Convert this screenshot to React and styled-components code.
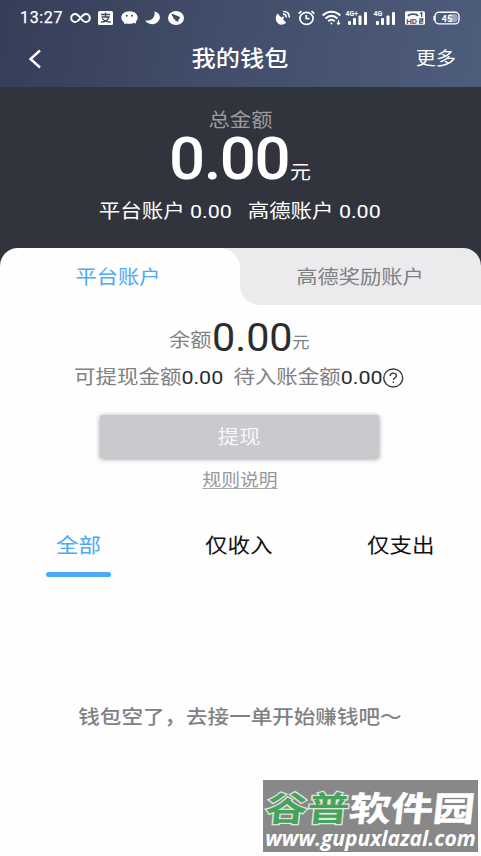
import React from 'react';
import styled, { createGlobalStyle } from 'styled-components';

const GlobalStyle = createGlobalStyle`
  * { box-sizing: border-box; }
  body {
    margin: 0;
    background: #fff;
    font-family: Roboto, "Noto Sans CJK SC", sans-serif;
  }
`;

const Screen = styled.main`
  width: 481px;
  height: 856px;
  display: flex;
  flex-direction: column;
  overflow: hidden;
  background: #fefefe;
`;

const Header = styled.header`
  height: 88px;
  background: linear-gradient(100deg, #363d57 0%, #414d69 45%, #4e5d7c 100%);
  border-bottom: 1px solid #2f3443;
  color: #fff;
`;

const StatusBar = styled.div`
  height: 35px;
  padding: 0 20px;
  display: flex;
  align-items: center;
`;

const Clock = styled.span`
  width: 50px;
  font-size: 16px;
  line-height: 20px;
  letter-spacing: 0.65px;
  -webkit-text-stroke: 0.25px #fff;
`;

const StatusIcon = styled.svg`
  display: block;
  flex: none;
  width: ${(p) => p.$w}px;
  height: 18px;
  margin-left: ${(p) => p.$gap || 0}px;
  overflow: visible;
`;

const NavBar = styled.nav`
  height: 48px;
  padding: 0 25px 0 27px;
  display: grid;
  grid-template-columns: 60px 1fr 60px;
  align-items: center;
`;

const Title = styled.h1`
  margin: 0 3px 0 0;
  text-align: center;
  font-size: 22px;
  line-height: 30px;
  font-weight: 500;
  transform: scaleX(1.1);
`;

const More = styled.span`
  text-align: right;
  font-size: 18px;
  line-height: 26px;
  transform: scaleX(1.12);
  transform-origin: right;
`;

const Summary = styled.section`
  height: 160px;
  padding-top: 20px;
  display: flex;
  flex-direction: column;
  align-items: center;
  background: #31343d;
  color: #fff;
`;

const SummaryLabel = styled.div`
  height: 26px;
  font-size: 19px;
  line-height: 26px;
  color: #9b9c9f;
  transform: scaleX(1.12);
`;

const Total = styled.div`
  height: 50px;
  display: flex;
  align-items: baseline;
  line-height: 50px;
  margin-right: 2px;
`;

const TotalNumber = styled.span`
  width: 122px;
  font-size: 60px;
  font-weight: 500;
  letter-spacing: -1.4px;
  transform: scaleX(1.06);
  transform-origin: left;
`;

const TotalUnit = styled.span`
  font-size: 19px;
  line-height: 24px;
  transform: scaleX(1.1);
`;

const Breakdown = styled.div`
  margin: 14px 2px 0 0;
  display: flex;
  gap: 14px;
  font-size: 19px;
  line-height: 28px;
  white-space: pre;
  transform: scaleX(1.13);
`;

const AccountTabs = styled.div`
  height: 57px;
  display: grid;
  grid-template-columns: 240px 241px;
  background: linear-gradient(#31343d 50%, #fefefe 50%);
`;

const TabBacking = styled.div`
  background: ${(p) => (p.$active ? 'linear-gradient(90deg, transparent 50%, #ebebed 50%)' : 'linear-gradient(#31343d 50%, #fefefe 50%)')};
`;

const AccountTab = styled.div`
  height: 57px;
  padding: ${(p) => (p.$active ? '3px 4px 0 0' : '3px 0 0')};
  display: flex;
  justify-content: center;
  align-items: center;
  font-size: 19px;
  line-height: 28px;
  color: ${(p) => (p.$active ? '#4ba9fb' : '#808184')};
  background: ${(p) => (p.$active ? '#fefefe' : '#ebebed')};
  border-radius: ${(p) => (p.$active ? '18px 20px 0 0' : '0 18px 0 20px')};
`;

const WideText = styled.span`
  display: inline-block;
  transform: scaleX(1.12);
`;

const Balance = styled.section`
  height: 208px;
  padding: 10px 2px 0 0;
  display: flex;
  flex-direction: column;
  align-items: center;
`;

const BalanceRow = styled.div`
  height: 46px;
  display: flex;
  align-items: center;
  color: #808184;
`;

const BalanceLabel = styled.span`
  width: 43px;
  padding-top: 6px;
  font-size: 19px;
  line-height: 28px;
  transform: scaleX(1.12);
  transform-origin: left;
`;

const BalanceNumber = styled.span`
  width: 81px;
  font-size: 39px;
  line-height: 46px;
  color: #2b2c2e;
  transform: scaleX(1.06);
  transform-origin: left;
`;

const BalanceUnit = styled.span`
  padding-top: 9px;
  font-size: 16px;
  line-height: 24px;
  transform: scaleX(1.08);
`;

const Details = styled.div`
  margin: 3px 1px 0 0;
  display: flex;
  align-items: center;
  font-size: 19px;
  line-height: 28px;
  color: #808184;
  transform: scaleX(1.13);
`;

const Amount = styled.b`
  font-weight: 400;
  color: #2b2c2e;
  margin-right: ${(p) => p.$gap || 0}px;
`;

const HelpIcon = styled.svg`
  width: 19px;
  height: 21px;
  display: block;
`;

const Withdraw = styled.button`
  width: 279px;
  height: 43px;
  margin: 23px 0 0;
  padding: 3px 0 0;
  flex: none;
  border: 0;
  border-radius: 2px;
  background: #c9cacd;
  color: #f7f7f8;
  font: 19px/28px Roboto, "Noto Sans CJK SC", sans-serif;
  box-shadow: 0 1px 5px rgba(0, 0, 0, 0.38);
`;

const Rules = styled.a`
  margin-top: 10px;
  font-size: 17px;
  line-height: 24px;
  color: #97989a;
  border-bottom: 1px solid #a8a8aa;
  height: 21px;
  transform: scaleX(1.11);
`;

const Filters = styled.div`
  height: 67px;
  padding-top: 17px;
  display: grid;
  grid-template-columns: 157px 164px 160px;
  justify-items: center;
`;

const Filter = styled.div`
  display: flex;
  flex-direction: column;
  align-items: center;
  font-size: 20.5px;
  line-height: 32px;
  color: ${(p) => (p.$active ? '#4ba9fb' : '#111')};

  &::after {
    content: '';
    width: 65px;
    height: 5px;
    margin-top: 10px;
    border-radius: 3px;
    background: ${(p) => (p.$active ? '#4ba9fb' : 'transparent')};
  }
`;

const FilterText = styled.span`
  transform: scaleX(1.1);
`;

const Empty = styled.p`
  height: 200px;
  margin: 0;
  padding: 124px 1px 0 0;
  text-align: center;
  font-size: 19.5px;
  line-height: 28px;
  font-weight: 500;
  color: #808184;
  transform: scaleX(1.105);
`;

const Watermark = styled.footer`
  width: 215px;
  height: 72px;
  padding-top: 8px;
  margin-left: 263px;
  background: #888;
  color: #fff;
`;

const Brand = styled.div`
  height: 38px;
  display: flex;
  justify-content: center;
  font: 900 34px/38px "Noto Sans CJK SC", sans-serif;
  white-space: nowrap;
  transform: skewX(-6deg) scaleX(1.23);
`;

const BrandAccent = styled.span`
  font-weight: 700;
  color: #46a35a;
  -webkit-text-stroke: 2.5px #dde5de;
  paint-order: stroke fill;
`;

const BrandName = styled.span`
  font-weight: 700;
  -webkit-text-stroke: 0.5px #fff;
`;

const Site = styled.div`
  height: 26px;
  display: flex;
  justify-content: center;
  font: italic 700 21px/25px "Open Sans", sans-serif;
  white-space: nowrap;
`;

const Signal = ({ label, gap }) => (
  <StatusIcon $w={22} $gap={gap} viewBox="0 0 22 18" fill="#fff">
    <text x="-.5" y="6.5" fontSize="7" fontWeight="700" fontFamily="Roboto">{label}</text>
    <rect x="2" y="12" width="3" height="4" rx="1" />
    <rect x="7" y="9" width="3" height="7" rx="1" />
    <rect x="12.5" y="6.5" width="3" height="9.5" rx="1" />
    <rect x="18" y="3" width="3" height="13" rx="1" />
  </StatusIcon>
);

export default function App() {
  return (
    <>
      <GlobalStyle />
      <Screen>
        <Header>
          <StatusBar>
            <Clock>13:27</Clock>
            <StatusIcon $w={21} viewBox="0 0 21 18" fill="none" stroke="#fff" strokeWidth="2">
              <path d="M10.5 9C8 5.8 6.8 5 5.2 5a4 4 0 0 0 0 8c1.6 0 2.8-.8 5.3-4s3.7-4 5.3-4a4 4 0 0 1 0 8c-1.6 0-2.8-.8-5.3-4Z" />
            </StatusIcon>
            <StatusIcon $w={15} $gap={7} viewBox="0 0 15 18">
              <rect y="2" width="15" height="14" rx="1.5" fill="#fff" />
              <path d="M3 5.5h9M7.5 3.5v4M3.5 8h7.5c-1 3-4 5-8 5.2M4 9.5c2 2 5 3.5 9 3.7" fill="none" stroke="#3b4560" strokeWidth="1.3" />
            </StatusIcon>
            <StatusIcon $w={17} $gap={8} viewBox="0 0 17 18">
              <path d="M8.5 2.2C3.8 2.2.3 5 .3 8.6c0 2 1.1 3.7 2.9 4.9v1.6l2.3-.7c1 .3 1.9.4 3 .4 1.8 0 3.5-.4 4.8-1l1.8 1-.3-2.2c1.2-1 1.9-2.3 1.9-4 0-3.6-3.5-6.4-8.2-6.4Z" fill="#fff" />
              <circle cx="5.8" cy="6.7" r="1" fill="#3b4560" />
              <circle cx="11" cy="6.7" r="1" fill="#3b4560" />
            </StatusIcon>
            <StatusIcon $w={16} $gap={7} viewBox="0 0 16 18" fill="#fff">
              <path d="M9.5 2.5c4 1.1 6 3.8 5.2 7.1-1.4 6-9.5 8-14.7 2 5 .9 10.6-2.2 9.5-9.1Z" />
            </StatusIcon>
            <StatusIcon $w={16} $gap={7} viewBox="0 0 16 18">
              <ellipse cx="8" cy="9" rx="8" ry="7" fill="#fff" />
              <path d="m3.5 4.5 8 3.2c1 .5 0 2.3-1.2 3.2v2.4l-1.4-1-2-.7.3-1.2-2.5-1.2 1-.7-1.5-1.4Z" fill="#3e4964" />
            </StatusIcon>
            <StatusIcon $w={16} $gap={91} viewBox="0 0 16 18">
              <path d="M2.5 4.5C0 8 .3 12 3.2 14.5c2 1.8 5.2 1.6 8-.7L7.8 10l1.5-1.5L8 7.2 6.5 8.7Z" fill="#fff" />
              <path d="M8 5.2c2-.2 3.3 1 3.2 3.2M8.2 2.5c4-.2 6.3 2 6.1 6" fill="none" stroke="#fff" strokeWidth="1.7" />
            </StatusIcon>
            <StatusIcon $w={17} $gap={7} viewBox="0 0 17 18" fill="none" stroke="#fff" strokeWidth="1.7">
              <ellipse cx="8.5" cy="9.3" rx="6.6" ry="6" />
              <path d="M8.2 6v3.7h3.3M.7 4.7 3.5 2M16.3 4.7 13.5 2" />
            </StatusIcon>
            <StatusIcon $w={19} $gap={7} viewBox="0 0 19 18" fill="none" stroke="#fff" strokeWidth="2">
              <path d="M.7 6.5C6 1.5 13 1.5 18.3 6.5M3.5 9.5c4-3.5 8-3.5 12 0M6.3 12.3c2-2 4.4-2 6.4 0" />
              <circle cx="9.5" cy="14.5" r="1" fill="#fff" stroke="none" />
              <path d="M16.5 11v4.5M14.9 13.7l1.6 1.8 1.6-1.8" strokeWidth="1.1" />
            </StatusIcon>
            <Signal label="4G+" gap={5} />
            <Signal label="4G" gap={6} />
            <StatusIcon $w={20} $gap={9} viewBox="0 0 20 18">
              <rect y="2.3" width="20" height="13.4" rx="1.5" fill="#fff" />
              <path d="M3 7c1.5-2.5 8.5-2.5 10 0" fill="none" stroke="#46526f" strokeWidth="1.6" />
              <text x="1.2" y="14.7" fill="#46526f" fontSize="8" fontWeight="700" fontFamily="Roboto">HD</text>
              <path d="M15 4.5 16.7 3.8V8M14.3 10h3.4v2h-3v2.2h3.6" fill="none" stroke="#46526f" strokeWidth="1.3" />
            </StatusIcon>
            <StatusIcon $w={27} $gap={8} viewBox="0 0 27 18">
              <rect x="2" y="3.2" width="24" height="11.7" rx="4" fill="none" stroke="#fff" strokeWidth="1.4" />
              <path d="M1.2 7v4.2" stroke="#fff" strokeWidth="1.6" />
              <path d="M16 5h5.5q3 0 3 3v2.2q0 3-3 3H16Z" fill="#9ba5b9" />
              <text x="14" y="12.6" textAnchor="middle" fill="#fff" fontSize="9.5" fontWeight="700" fontFamily="Roboto">45</text>
            </StatusIcon>
          </StatusBar>
          <NavBar>
            <svg width="16" height="20" viewBox="0 0 16 20" fill="none" stroke="#fff" strokeWidth="2.4">
              <path d="M13 1.5 3.5 10 13 18.5" />
            </svg>
            <Title>我的钱包</Title>
            <More>更多</More>
          </NavBar>
        </Header>
        <Summary>
          <SummaryLabel>总金额</SummaryLabel>
          <Total>
            <TotalNumber>0.00</TotalNumber>
            <TotalUnit>元</TotalUnit>
          </Total>
          <Breakdown>
            <span>平台账户 0.00</span>
            <span>高德账户 0.00</span>
          </Breakdown>
        </Summary>
        <AccountTabs>
          <TabBacking $active>
            <AccountTab $active><WideText>平台账户</WideText></AccountTab>
          </TabBacking>
          <TabBacking>
            <AccountTab><WideText>高德奖励账户</WideText></AccountTab>
          </TabBacking>
        </AccountTabs>
        <Balance>
          <BalanceRow>
            <BalanceLabel>余额</BalanceLabel>
            <BalanceNumber>0.00</BalanceNumber>
            <BalanceUnit>元</BalanceUnit>
          </BalanceRow>
          <Details>
            可提现金额<Amount $gap={9}>0.00</Amount>
            待入账金额<Amount>0.00</Amount>
            <HelpIcon viewBox="0 0 19 21" fill="none" stroke="#3c3d3f" strokeWidth="1.3">
              <ellipse cx="9.5" cy="10" rx="8.4" ry="9" />
              <path d="M6.8 8c0-3.8 5.5-3.7 5.5-.3 0 2.2-2.7 2.2-2.7 4.2M9.6 13.4V15" />
            </HelpIcon>
          </Details>
          <Withdraw><WideText>提现</WideText></Withdraw>
          <Rules>规则说明</Rules>
        </Balance>
        <Filters>
          <Filter $active><FilterText>全部</FilterText></Filter>
          <Filter><FilterText>仅收入</FilterText></Filter>
          <Filter><FilterText>仅支出</FilterText></Filter>
        </Filters>
        <Empty>钱包空了，去接一单开始赚钱吧～</Empty>
        <Watermark>
          <Brand><BrandAccent>谷普</BrandAccent><BrandName>软件园</BrandName></Brand>
          <Site>www.gupuxlazal.com</Site>
        </Watermark>
      </Screen>
    </>
  );
}
